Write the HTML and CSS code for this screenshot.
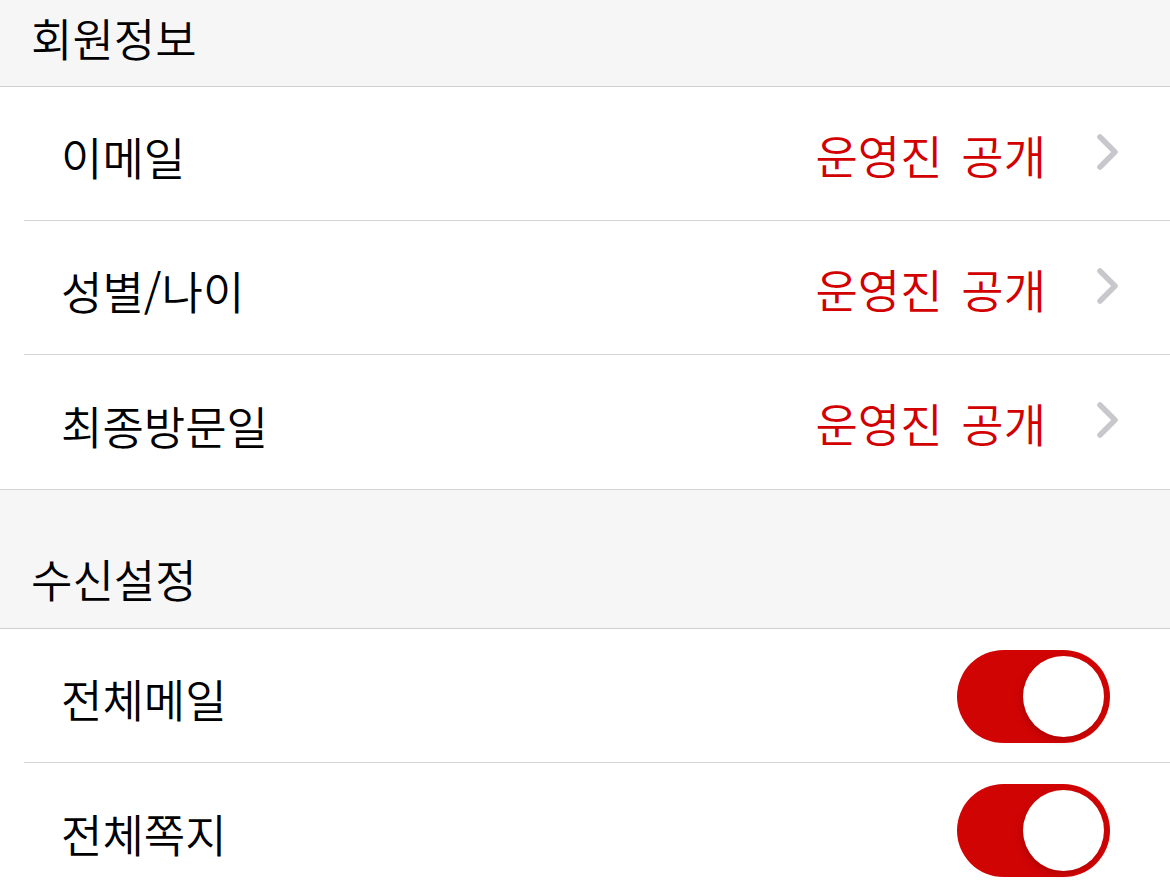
FILE: index.html
```html
<!DOCTYPE html>
<html lang="ko">
<head>
<meta charset="utf-8">
<link rel="stylesheet" href="styles.css">
</head>
<body>
<div class="page">
  <div class="section-head first"><span>회원정보</span></div>
  <ul class="list">
    <li class="row"><span class="label">이메일</span><span class="value">운영진 공개</span><svg class="chev" width="24" height="38" viewBox="0 0 24 38"><path d="M4 4 L19 19 L4 34" fill="none" stroke="#c7c7cc" stroke-width="5.5" stroke-linecap="round" stroke-linejoin="round"/></svg></li>
    <li class="row"><span class="label">성별/나이</span><span class="value">운영진 공개</span><svg class="chev" width="24" height="38" viewBox="0 0 24 38"><path d="M4 4 L19 19 L4 34" fill="none" stroke="#c7c7cc" stroke-width="5.5" stroke-linecap="round" stroke-linejoin="round"/></svg></li>
    <li class="row last"><span class="label">최종방문일</span><span class="value">운영진 공개</span><svg class="chev" width="24" height="38" viewBox="0 0 24 38"><path d="M4 4 L19 19 L4 34" fill="none" stroke="#c7c7cc" stroke-width="5.5" stroke-linecap="round" stroke-linejoin="round"/></svg></li>
  </ul>
  <div class="section-head second"><span>수신설정</span></div>
  <ul class="list">
    <li class="row"><span class="label">전체메일</span><span class="toggle"><span class="knob"></span></span></li>
    <li class="row"><span class="label">전체쪽지</span><span class="toggle"><span class="knob"></span></span></li>
  </ul>
</div>
</body>
</html>
```
FILE: styles.css
```css
html, body {
  margin: 0;
  padding: 0;
  background: #ffffff;
}
body {
  font-family: "Noto Sans CJK KR", "Noto Sans", sans-serif;
  font-weight: 350;
  color: #000;
  width: 1170px;
  height: 886px;
  overflow: hidden;
}
.page {
  display: flex;
  flex-direction: column;
}
.section-head {
  background: #f6f6f6;
  border-bottom: 1px solid #cfcfcf;
  display: flex;
  align-items: flex-end;
  padding-left: 31px;
  font-size: 45px;
  box-sizing: border-box;
}
.section-head.first {
  height: 87px;
  padding-bottom: 26px;
}
.section-head.second {
  height: 139px;
  padding-bottom: 27px;
}
.section-head span {
  line-height: 1;
}
.list {
  list-style: none;
  margin: 0;
  padding: 0 0 0 24px;
}
.row {
  display: flex;
  align-items: center;
  height: 134px;
  border-bottom: 1px solid #d4d4d4;
  padding-left: 37px;
  padding-right: 50px;
  box-sizing: border-box;
}
.list .row.last {
  margin-left: -24px;
  padding-left: 61px;
  height: 135px;
}
.label {
  font-size: 45px;
  line-height: 1;
  flex: 1;
  padding-top: 6px;
}
.value {
  font-size: 46px;
  line-height: 1;
  color: #d20000;
  word-spacing: 6px;
  margin-right: 50px;
}
.chev {
  display: block;
  margin-top: -4px;
}
.toggle {
  width: 153px;
  height: 93px;
  border-radius: 47px;
  background: #d10404;
  position: relative;
  margin-right: 10px;
  margin-top: 1px;
}
.knob {
  position: absolute;
  top: 6px;
  right: 6px;
  width: 81px;
  height: 81px;
  border-radius: 50%;
  background: #fff;
  box-shadow: -2px 3px 6px rgba(120, 0, 0, 0.35);
}
.list:last-child .row:last-child {
  border-bottom: none;
}
```
